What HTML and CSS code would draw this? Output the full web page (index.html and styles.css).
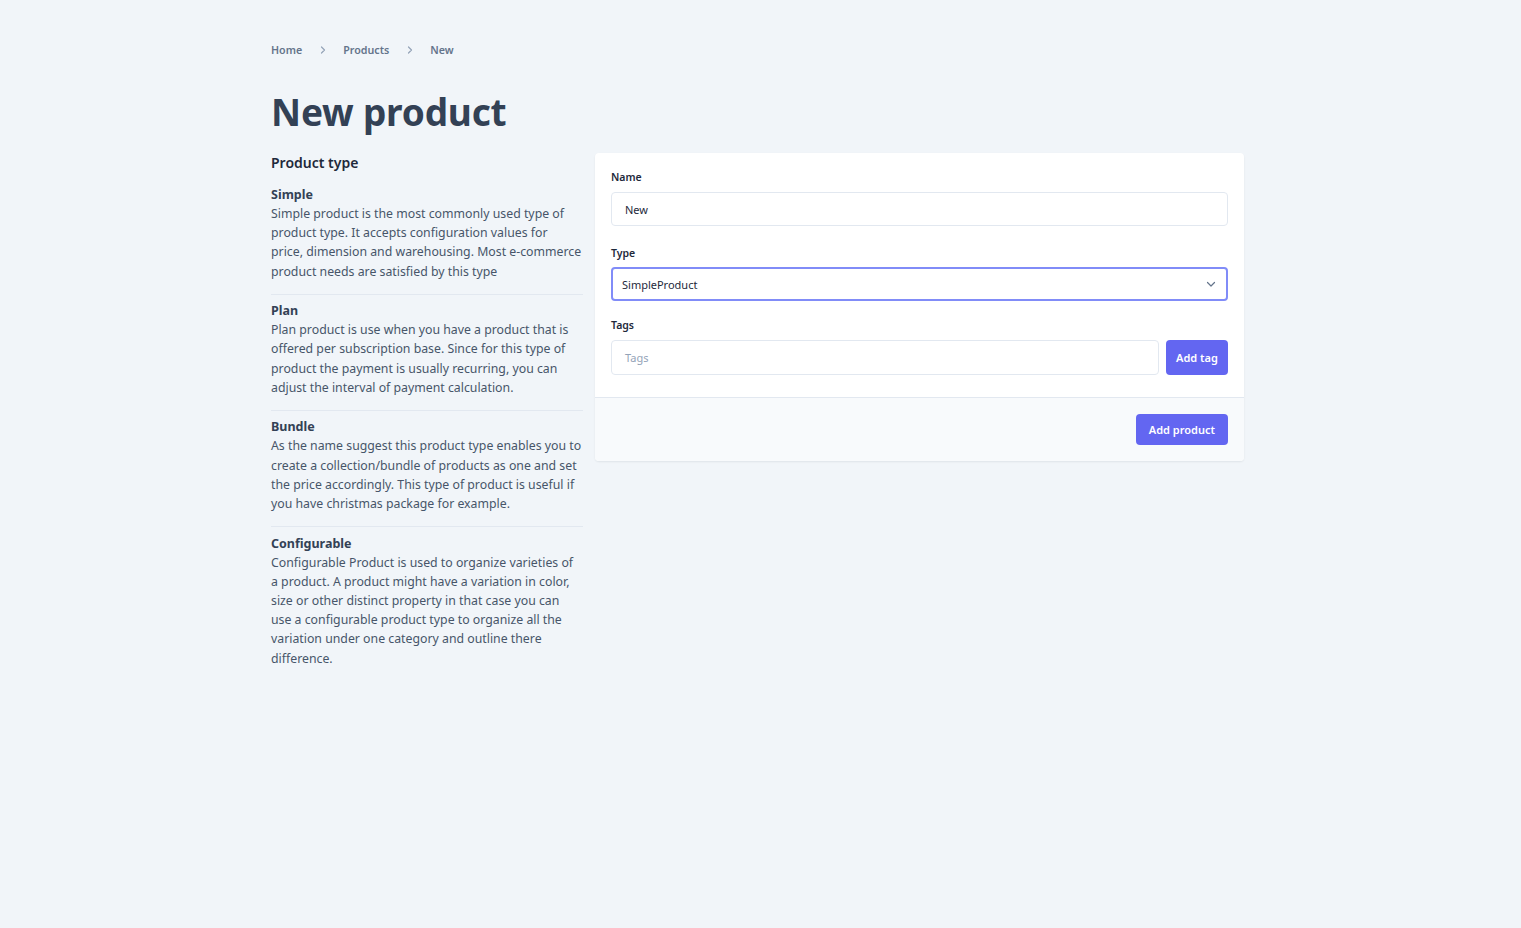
FILE: index.html
```html
<!DOCTYPE html>
<html lang="en">
<head>
<meta charset="utf-8">
<title>New product</title>
<link rel="stylesheet" href="styles.css">
</head>
<body>
<div class="page">
  <nav class="crumbs">
    <a class="crumb">Home</a>
    <svg class="sep" viewBox="0 0 10 10" width="10" height="10"><path d="M3.5 2 L6.5 5 L3.5 8" fill="none" stroke="#94a3b8" stroke-width="1.2" stroke-linecap="round" stroke-linejoin="round"/></svg>
    <a class="crumb">Products</a>
    <svg class="sep" viewBox="0 0 10 10" width="10" height="10"><path d="M3.5 2 L6.5 5 L3.5 8" fill="none" stroke="#94a3b8" stroke-width="1.2" stroke-linecap="round" stroke-linejoin="round"/></svg>
    <a class="crumb">New</a>
  </nav>
  <h1 class="title">New product</h1>
  <div class="layout">
    <aside class="info">
      <h2 class="info-title">Product type</h2>
      <section class="type">
        <h3>Simple</h3>
        <p>Simple product is the most commonly used type of<br>product type. It accepts configuration values for<br>price, dimension and warehousing. Most e-commerce<br>product needs are satisfied by this type</p>
      </section>
      <section class="type">
        <h3>Plan</h3>
        <p>Plan product is use when you have a product that is<br>offered per subscription base. Since for this type of<br>product the payment is usually recurring, you can<br>adjust the interval of payment calculation.</p>
      </section>
      <section class="type">
        <h3>Bundle</h3>
        <p>As the name suggest this product type enables you to<br>create a collection/bundle of products as one and set<br>the price accordingly. This type of product is useful if<br>you have christmas package for example.</p>
      </section>
      <section class="type">
        <h3>Configurable</h3>
        <p>Configurable Product is used to organize varieties of<br>a product. A product might have a variation in color,<br>size or other distinct property in that case you can<br>use a configurable product type to organize all the<br>variation under one category and outline there<br>difference.</p>
      </section>
    </aside>
    <form class="card">
      <div class="card-body">
        <div class="field">
          <label class="label">Name</label>
          <div class="input">New</div>
        </div>
        <div class="field field-type">
          <label class="label">Type</label>
          <div class="select">
            <span>SimpleProduct</span>
            <svg viewBox="0 0 12 12" width="12" height="12"><path d="M2.5 4.5 L6 8 L9.5 4.5" fill="none" stroke="#64748b" stroke-width="1.2" stroke-linecap="round" stroke-linejoin="round"/></svg>
          </div>
        </div>
        <div class="field field-tags">
          <label class="label">Tags</label>
          <div class="tag-row">
            <div class="input placeholder">Tags</div>
            <button type="button" class="btn btn-tag">Add tag</button>
          </div>
        </div>
      </div>
      <div class="card-footer">
        <button type="button" class="btn btn-main">Add product</button>
      </div>
    </form>
  </div>
</div>
</body>
</html>
```
FILE: styles.css
```css
* { box-sizing: border-box; }
html, body {
  margin: 0;
  padding: 0;
  background: #f1f5f9;
  font-family: "Noto Sans", "Open Sans", sans-serif;
  color: #334155;
}
.page {
  width: 973px;
  margin-left: 271px;
  padding-top: 42px;
}
.crumbs {
  display: flex;
  align-items: center;
  font-size: 10.7px;
  font-weight: 600;
  color: #64748b;
  height: 16px;
}
.crumb { color: #64748b; }
.sep { margin: 0 15px 0 16px; }
.title {
  margin: 30px 0 0 0;
  font-size: 37px;
  line-height: 48px;
  font-weight: 700;
  color: #334155;
  letter-spacing: -0.2px;
}
.layout {
  display: flex;
  align-items: flex-start;
  gap: 12px;
  margin-top: 17px;
}
.info {
  width: 312px;
  flex: none;
}
.info-title {
  margin: 0;
  font-size: 14px;
  line-height: 20px;
  font-weight: 600;
  color: #1e293b;
}
.type {
  padding: 6.5px 0 12.9px 0;
  border-bottom: 1px solid #e2e8f0;
}
.type:first-of-type { padding-top: 12px; }
.type:last-child { border-bottom: none; }
.type h3 {
  margin: 0;
  font-size: 12.5px;
  line-height: 19px;
  font-weight: 700;
  color: #334155;
}
.type p {
  margin: 0;
  font-size: 12.3px;
  line-height: 19.2px;
  color: #475569;
}
.card {
  width: 649px;
  flex: none;
  background: #fff;
  border-radius: 4px;
  box-shadow: 0 1px 2px rgba(15, 23, 42, 0.08);
  overflow: hidden;
  margin: 0;
}
.card-body {
  padding: 16px 16px 22px 16px;
  display: flex;
  flex-direction: column;
}
.field { display: flex; flex-direction: column; }
.field-type { margin-top: 19px; }
.field-tags { margin-top: 16px; }
.label {
  font-size: 10.5px;
  line-height: 16px;
  font-weight: 600;
  color: #1e293b;
  margin-bottom: 7px;
}
.field-type .label { margin-bottom: 6px; }
.input {
  height: 34px;
  border: 1px solid #e2e8f0;
  border-radius: 4px;
  padding: 0 13px;
  display: flex;
  align-items: center;
  font-size: 11px;
  color: #1e293b;
  background: #fff;
}
.input.placeholder { color: #94a3b8; flex: 1; height: 35px; }
.select {
  height: 34px;
  border: 2px solid #818cf8;
  border-radius: 4px;
  padding: 0 9px;
  display: flex;
  align-items: center;
  justify-content: space-between;
  font-size: 11px;
  color: #1e293b;
}
.tag-row { display: flex; gap: 7px; }
.btn {
  border: none;
  background: #6366f1;
  color: #fff;
  font-family: inherit;
  font-size: 11px;
  font-weight: 600;
  border-radius: 4px;
  cursor: pointer;
}
.btn-tag { width: 62px; height: 35px; padding: 0; }
.card-footer {
  background: #f8fafc;
  border-top: 1px solid #e2e8f0;
  padding: 16px;
  display: flex;
  justify-content: flex-end;
}
.btn-main { height: 31px; padding: 0 13px; }
```
